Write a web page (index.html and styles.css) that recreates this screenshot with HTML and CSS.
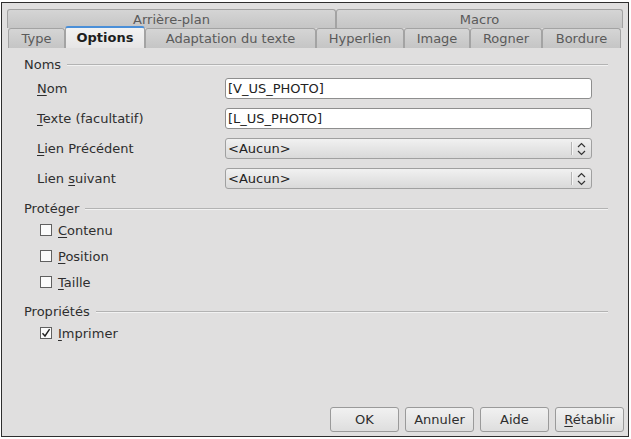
FILE: index.html
```html
<!DOCTYPE html>
<html lang="fr">
<head>
<meta charset="utf-8">
<title>Options</title>
<link rel="stylesheet" href="styles.css">
</head>
<body>
<div class="dialog">
  <div class="tabs">
    <div class="tabrow back">
      <div class="tab">Arrière-plan</div>
      <div class="tab">Macro</div>
    </div>
    <div class="tabrow front">
      <div class="tab">Type</div>
      <div class="tab active">Options</div>
      <div class="tab">Adaptation du texte</div>
      <div class="tab">Hyperlien</div>
      <div class="tab">Image</div>
      <div class="tab">Rogner</div>
      <div class="tab">Bordure</div>
    </div>
  </div>

  <div class="page">
    <section class="section names">
      <div class="heading"><span>Noms</span><span class="rule"></span></div>
      <div class="rows fields">
        <div class="row">
          <label class="label"><u>N</u>om</label>
          <div class="input">[V_US_PHOTO]</div>
        </div>
        <div class="row">
          <label class="label"><u>T</u>exte (facultatif)</label>
          <div class="input">[L_US_PHOTO]</div>
        </div>
        <div class="row">
          <label class="label"><u>L</u>ien Précédent</label>
          <div class="select"><span class="value">&lt;Aucun&gt;</span><span class="sep"></span><svg class="spin" width="9" height="14" viewBox="0 0 9 14"><path d="M1 5 L4.5 1.5 L8 5 M1 9 L4.5 12.5 L8 9" fill="none" stroke="#333" stroke-width="1.2"/></svg></div>
        </div>
        <div class="row">
          <label class="label">Lien <u>s</u>uivant</label>
          <div class="select"><span class="value">&lt;Aucun&gt;</span><span class="sep"></span><svg class="spin" width="9" height="14" viewBox="0 0 9 14"><path d="M1 5 L4.5 1.5 L8 5 M1 9 L4.5 12.5 L8 9" fill="none" stroke="#333" stroke-width="1.2"/></svg></div>
        </div>
      </div>
    </section>

    <section class="section protect">
      <div class="heading"><span>Protéger</span><span class="rule"></span></div>
      <div class="rows checks">
        <div class="check"><span class="box"></span><span><u>C</u>ontenu</span></div>
        <div class="check"><span class="box"></span><span><u>P</u>osition</span></div>
        <div class="check"><span class="box"></span><span><u>T</u>aille</span></div>
      </div>
    </section>

    <section class="section props">
      <div class="heading"><span>Propriétés</span><span class="rule"></span></div>
      <div class="rows checks">
        <div class="check"><span class="box"><svg width="10" height="10" viewBox="0 0 10 10"><path d="M1.5 5.2 L4 8 L8.6 1.2" fill="none" stroke="#222" stroke-width="1.4"/></svg></span><span><u>I</u>mprimer</span></div>
      </div>
    </section>
  </div>

  <div class="footer">
    <button class="btn">OK</button>
    <button class="btn">Annuler</button>
    <button class="btn">Aide</button>
    <button class="btn"><u>R</u>établir</button>
  </div>
</div>
</body>
</html>
```

FILE: styles.css
```css
html, body {
  margin: 0;
  padding: 0;
  background: #ffffff;
}

body {
  padding: 2px 0 0 1px;
}

.dialog {
  box-sizing: border-box;
  width: 628px;
  height: 435px;
  border: 1px solid #2e2e2e;
  background: #e0dfdf;
  display: flex;
  flex-direction: column;
  font-family: "DejaVu Sans", sans-serif;
  font-size: 13px;
  color: #2e2e2e;
}

.tabs {
  padding: 6px 0 0 5px;
}

.tabrow {
  display: grid;
}

.tabrow.back {
  grid-template-columns: 329px 287px;
  height: 19px;
}

.tabrow.front {
  grid-template-columns: 57px 80px 171px 88px 66px 72px 79px;
  height: 22px;
  margin-top: -2px;
  padding-left: 1px;
  align-items: end;
}

.tab {
  box-sizing: border-box;
  height: 20px;
  display: flex;
  align-items: center;
  justify-content: center;
  border: 1px solid #a3a3a3;
  border-bottom: none;
  border-radius: 3px 3px 0 0;
  background: linear-gradient(#d5d5d5, #c5c5c5);
  color: #5a5a5a;
  white-space: nowrap;
}

.back .tab {
  height: 19px;
  align-self: start;
}

.tab.active {
  height: 22px;
  border-top: 2px solid #4a8fd8;
  border-color: #a3a3a3;
  border-top-color: #4a8fd8;
  background: linear-gradient(#f3f3f3, #e6e5e5);
  color: #1e1e1e;
  font-weight: bold;
  padding-bottom: 1px;
}

.page {
  display: flex;
  flex-direction: column;
  padding: 8px 20px 0 22px;
}

.section + .section {
  margin-top: 11px;
}

.section.props {
  margin-top: 12px;
}

.heading {
  display: flex;
  align-items: center;
  gap: 6px;
  height: 17px;
}

.rule {
  flex: 1;
  height: 0;
  border-top: 1px solid #b3b3b3;
  border-bottom: 1px solid #f2f2f2;
}

.rows {
  display: flex;
  flex-direction: column;
}

.fields {
  margin-top: 5px;
  gap: 9px;
}

.row {
  display: flex;
  align-items: center;
  height: 21px;
  padding-left: 13px;
}

.label {
  width: 188px;
}

.input,
.select {
  box-sizing: border-box;
  width: 367px;
  height: 21px;
  display: flex;
  align-items: center;
  padding-left: 2px;
  border-radius: 3px;
  color: #222;
}

.input {
  background: #ffffff;
  border: 1px solid #8e8e8e;
}

.select {
  height: 21px;
  background: linear-gradient(#f1f1f1, #d9d9d9);
  border: 1px solid #a0a0a0;
}

.select .value {
  flex: 1;
}

.select .sep {
  width: 1px;
  height: 13px;
  background: #b5b5b5;
  box-shadow: 1px 0 0 #f6f6f6;
  margin-right: 5px;
}

.select .spin {
  margin-right: 5px;
}

.checks {
  margin-top: 4px;
  gap: 8px;
}

.check {
  display: flex;
  align-items: center;
  gap: 6px;
  height: 18px;
  padding-left: 16px;
}

.box {
  box-sizing: border-box;
  width: 12px;
  height: 12px;
  border: 1px solid #606060;
  background: #fbfbfb;
  display: flex;
  align-items: center;
  justify-content: center;
}

.footer {
  margin-top: auto;
  display: flex;
  justify-content: flex-end;
  gap: 6px;
  padding: 0 4px 4px 0;
}

.btn {
  box-sizing: border-box;
  width: 69px;
  height: 25px;
  font: inherit;
  color: #2e2e2e;
  border: 1px solid #9a9a9a;
  border-radius: 3px;
  background: linear-gradient(#f1f1f1, #dedede);
  padding: 0;
}

u {
  text-decoration: underline;
  text-underline-offset: 2px;
}
```
